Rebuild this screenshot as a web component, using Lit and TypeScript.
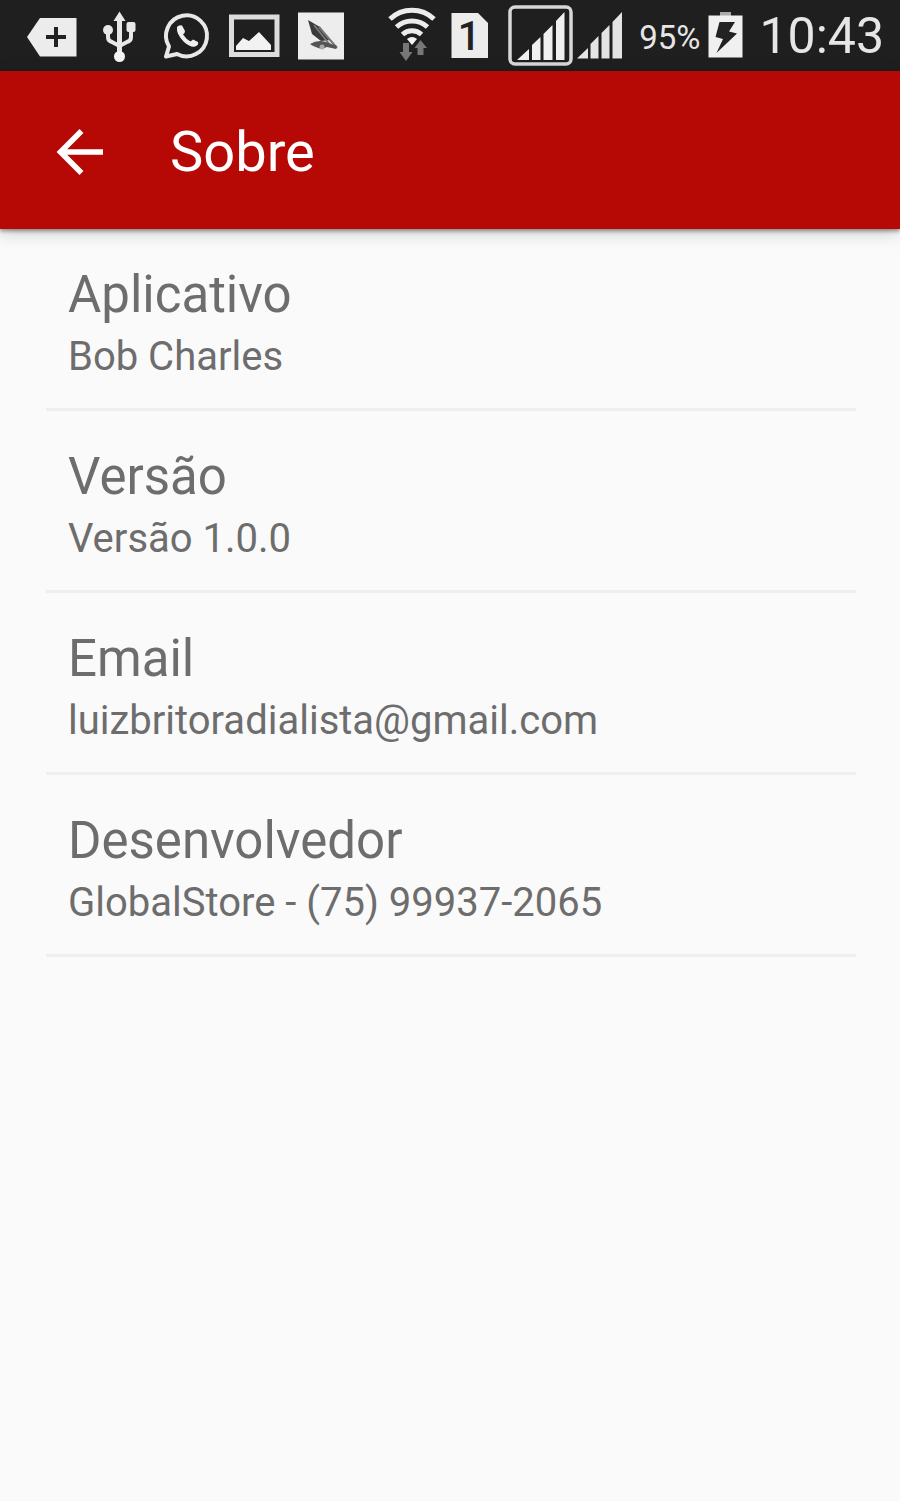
import { LitElement, html, css } from "lit";
import { customElement, property } from "lit/decorators.js";

const tagIcon = html`<svg width="54" height="72" viewBox="26 0 54 72" aria-hidden="true">
  <path d="M27 37 40 18H76.500V56.500H40Z" fill="#ececec" />
  <path d="M46 37H66M56 27V47" stroke="#222" stroke-width="4" />
</svg>`;

const usbIcon = html`<svg width="54" height="72" viewBox="93 0 54 72" aria-hidden="true">
  <g fill="none" stroke="#e8e8e8" stroke-width="4" stroke-linejoin="round">
    <path d="M119.500 18V56" stroke-width="5" />
    <path d="M108 31V37Q108 41 112 42L119.500 46" />
    <path d="M131 27V37Q131 41 127 42L119.500 46" />
  </g>
  <path d="M113.500 21 119.500 11.500 125.500 21Z" fill="#e8e8e8" />
  <rect x="126.500" y="22" width="9" height="10" rx="2" fill="#e8e8e8" />
  <circle cx="108" cy="30" r="5" fill="#e8e8e8" />
  <circle cx="119.500" cy="56.500" r="5.500" fill="#f4f4f4" />
</svg>`;

const phoneBubbleIcon = html`<svg width="54" height="72" viewBox="160 0 54 72" aria-hidden="true">
  <path d="M166 56.500 169 46.500A20.500 20.500 0 1 1 177 54Z" fill="none" stroke="#e8e8e8" stroke-width="4" stroke-linejoin="round" />
  <path d="M177 27Q179 24.500 182 25.500L185 31Q185 33 183 34.500Q186 39 190.500 41.500L193 39.500 198 42Q199 45 195 46.500Q191 48 184 42Q176 34 177 27Z" fill="#efefef" />
</svg>`;

const pictureIcon = html`<svg width="54" height="72" viewBox="227 0 54 72" aria-hidden="true">
  <rect x="231.500" y="17" width="45.500" height="37.500" fill="none" stroke="#dcdcdc" stroke-width="5" />
  <path d="M236 50V46L243 38 249 41 259 32 271 45V50Z" fill="#f2f2f2" />
</svg>`;

const appIcon = html`<svg width="54" height="72" viewBox="294 0 54 72" aria-hidden="true">
  <rect x="298" y="12.500" width="46" height="47" fill="#ededed" />
  <path d="M308 20 320 27 330 40 321 41 312 34Z" fill="#3a3a3a" />
  <path d="M319 27 337 48M314 25 330 45" stroke="#777" stroke-width="2" />
  <path d="M310 44Q318 39 326 42L337 46 336 49 327 47 322 49Q314 47 310 44Z" fill="#555" />
  <circle cx="322" cy="47" r="2.500" fill="#aaa" />
</svg>`;

const wifiIcon = html`<svg width="48" height="72" viewBox="388 0 48 72" aria-hidden="true">
  <g fill="none" stroke="#ececec" stroke-width="5">
    <path d="M390 19A32 32 0 0 1 434 19" />
    <path d="M396.500 27A23 23 0 0 1 427.500 27" />
    <path d="M402.500 34.500A14 14 0 0 1 421.500 34.500" />
  </g>
  <path d="M407 39Q412 35 417 39L412 45Z" fill="#f4f4f4" />
  <path d="M403 43H409V52H412.500L406 61 399.500 52H403Z" fill="#777" />
  <path d="M417.500 55H423.500V48H427L420.500 40 414.500 48H417.500Z" fill="#777" />
</svg>`;

const simIcon = html`<svg width="37" height="72" viewBox="450 0 37 72" role="img" aria-label="SIM 1">
  <path d="M450.500 13H477L487 23V58H450.500Z" fill="#ececec" />
  <text class="sim" x="468" y="50" text-anchor="middle">1</text>
</svg>`;

const framedSignalIcon = html`<svg width="65" height="72" viewBox="507 0 65 72" aria-hidden="true">
  <rect x="509" y="7" width="61" height="57" rx="5" fill="none" stroke="#d8d8d8" stroke-width="3.500" />
  <path d="M516 60 528 49V60ZM531 60V45L539.500 37V60ZM542.500 60V34L551.500 25V60ZM555 60V21L563.500 12V60Z" fill="#f0f0f0" />
</svg>`;

const signalIcon = html`<svg width="46" height="72" viewBox="576 0 46 72" aria-hidden="true">
  <path d="M576 58.500 587 48V58.500ZM589.500 58.500V44L597.500 36V58.500ZM600.500 58.500V33L608.500 25V58.500ZM611.500 58.500V22L621 12V58.500Z" fill="#e4e4e4" />
</svg>`;

const batteryIcon = html`<svg width="35" height="72" viewBox="708 0 35 72" aria-hidden="true">
  <rect x="720" y="12" width="11" height="4" fill="#aaa" />
  <rect x="708.500" y="15.500" width="34" height="42" fill="#f0f0f0" />
  <path d="M719.500 22H735L729 31.500 737 33.500 716.500 53 723 39 715.500 37Z" fill="#222" />
</svg>`;

@customElement("about-row")
class AboutRow extends LitElement {
  @property() heading = "";
  @property() value = "";

  static styles = css`
    :host {
      display: block;
      box-sizing: border-box;
      padding: 33px 22px 25px;
      border-bottom: 3px solid #eeeeee;
      color: #6d6d6d;
    }
    .heading {
      margin: 0 0 2px;
      font-size: 51px;
      font-weight: 400;
      line-height: 66px;
    }
    .value {
      margin: 0;
      font-size: 40px;
      line-height: 53px;
    }
  `;

  render() {
    return html`<h2 class="heading">${this.heading}</h2>
      <p class="value">${this.value}</p>`;
  }
}

@customElement("app-root")
class AppRoot extends LitElement {
  static styles = css`
    :host {
      display: flex;
      flex-direction: column;
      min-height: 100vh;
      background: #fafafa;
      font-family: Roboto, "Liberation Sans", sans-serif;
    }
    svg {
      display: block;
      flex: none;
    }
    .status {
      display: flex;
      justify-content: space-between;
      height: 71px;
      padding: 0 16px 0 26px;
      background: #1f1f1f;
      color: #e6e6e6;
      overflow: hidden;
    }
    .group {
      display: flex;
    }
    .notices {
      gap: 13px;
    }
    .network {
      display: flex;
      gap: 15px;
    }
    .bars {
      display: flex;
      gap: 4px;
      margin-left: 5px;
    }
    .sim {
      font: 500 40px Roboto, sans-serif;
      fill: #222222;
    }
    .percent {
      margin: 0 8px 0 16px;
      font-size: 33px;
      line-height: 76px;
    }
    .clock {
      margin-left: 16px;
      font-size: 50px;
      line-height: 72px;
    }
    .bar {
      display: flex;
      align-items: center;
      box-sizing: border-box;
      height: 158px;
      padding-top: 3px;
      background: #b60905;
      color: #ffffff;
      box-shadow: 0 2px 4px rgba(0, 0, 0, 0.4), 0 4px 16px rgba(0, 0, 0, 0.18);
    }
    .back {
      margin: 0 46px 0 36px;
      padding: 20px;
      border: 0;
      background: none;
      color: inherit;
    }
    .title {
      margin: 0;
      font-size: 56px;
      font-weight: 400;
      line-height: 72px;
    }
    .list {
      padding: 0 44px 0 46px;
    }
  `;

  render() {
    return html`
      <div class="status">
        <div class="group notices">${tagIcon}${usbIcon}${phoneBubbleIcon}${pictureIcon}${appIcon}</div>
        <div class="group">
          <div class="network">
            ${wifiIcon}${simIcon}
            <div class="bars">${framedSignalIcon}${signalIcon}</div>
          </div>
          <span class="percent">95%</span>
          ${batteryIcon}
          <time class="clock">10:43</time>
        </div>
      </div>
      <header class="bar">
        <button class="back" type="button" aria-label="Voltar">
          <svg width="48" height="48" viewBox="56 127 48 48" aria-hidden="true">
            <path d="M103 151H61M81.500 130 60.500 151 81.500 172" fill="none" stroke="currentColor" stroke-width="5.500" />
          </svg>
        </button>
        <h1 class="title">Sobre</h1>
      </header>
      <main class="list">
        <about-row heading="Aplicativo" value="Bob Charles"></about-row>
        <about-row heading="Versão" value="Versão 1.0.0"></about-row>
        <about-row heading="Email" value="luizbritoradialista@gmail.com"></about-row>
        <about-row heading="Desenvolvedor" value="GlobalStore - (75) 99937-2065"></about-row>
      </main>
    `;
  }
}
